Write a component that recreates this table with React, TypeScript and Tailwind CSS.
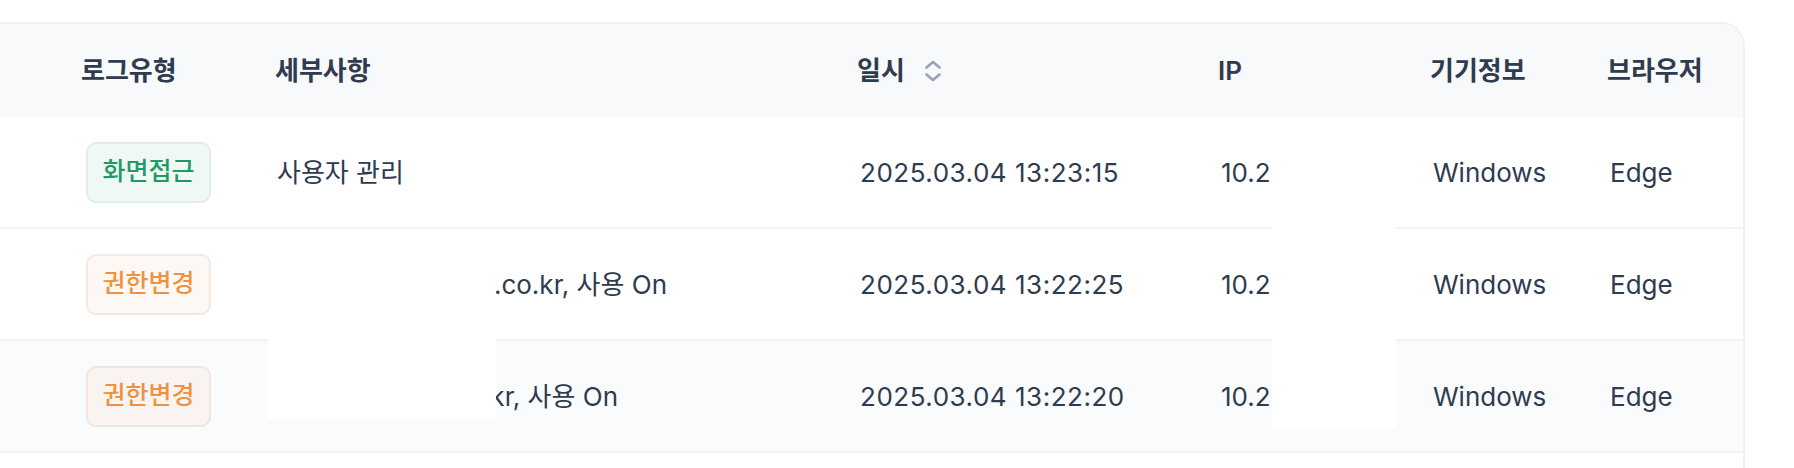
import { ReactNode } from "react";

type Row = {
    type: string;
    badge: string;
    detail: string;
    detailBox: string;
    date: string;
    ip: string;
    device: string;
    browser: string;
    rowBg: string;
};

const rows: Row[] = [
    {
        type: "화면접근",
        badge: "bg-[#eff8f4] border-[#dfeee7] text-[#1f9a66]",
        detail: "사용자 관리",
        detailBox: "",
        date: "2025.03.04 13:23:15",
        ip: "10.20.130.25",
        device: "Windows",
        browser: "Edge",
        rowBg: "bg-white",
    },
    {
        type: "권한변경",
        badge: "bg-[rgba(240,140,60,0.06)] border-[rgba(200,150,120,0.16)] text-[#ef923f]",
        detail: "admin@test.co.kr, 사용 On",
        detailBox: "inline-block w-[390px] text-right",
        date: "2025.03.04 13:22:25",
        ip: "10.20.130.25",
        device: "Windows",
        browser: "Edge",
        rowBg: "bg-white",
    },
    {
        type: "권한변경",
        badge: "bg-[rgba(240,140,60,0.06)] border-[rgba(200,150,120,0.16)] text-[#ef923f]",
        detail: "user@ab.co.kr, 사용 On",
        detailBox: "inline-block w-[341px] text-right",
        date: "2025.03.04 13:22:20",
        ip: "10.20.130.25",
        device: "Windows",
        browser: "Edge",
        rowBg: "bg-[#fafbfc]",
    },
];

const cols = "grid grid-cols-[194px_582px_361px_212px_177px_1fr] pl-[81px]";

function SortIcon() {
    return (
        <svg width="16" height="22" viewBox="0 0 16 22" fill="none" stroke="#94a3b8" strokeWidth="2.6" strokeLinecap="round" strokeLinejoin="round">
            <path d="M1.5 7.5 L8 2 L14.5 7.5" />
            <path d="M1.5 14.5 L8 20 L14.5 14.5" />
        </svg>
    );
}

function Cell({ children, className = "" }: { children: ReactNode; className?: string }) {
    return <div className={`flex items-center whitespace-nowrap ${className}`}>{children}</div>;
}

export default function App() {
    return (
        <div className="w-[1794px] h-[468px] overflow-hidden bg-white font-[Inter,'Noto_Sans_CJK_KR',sans-serif] text-[#2f3b50]">
            <div className="relative mt-[22px] w-[1745px] h-[446px] border-t-2 border-r-2 border-[#eef1f5] rounded-tr-[24px] overflow-hidden">
                {/* 헤더 */}
                <div className={`${cols} h-[93px] bg-[#f8f9fb] text-[26px] font-semibold text-[#2f3b4e]`}>
                    <Cell>로그유형</Cell>
                    <Cell>세부사항</Cell>
                    <Cell className="gap-5">
                        일시
                        <SortIcon />
                    </Cell>
                    <Cell>IP</Cell>
                    <Cell>기기정보</Cell>
                    <Cell>브라우저</Cell>
                </div>

                {rows.map((row, i) => (
                    <div key={i} className={`${cols} h-[112px] border-b-2 border-[#f1f2f5] text-[26px] ${row.rowBg}`}>
                        <Cell className="pl-[5px]">
                            <span className={`flex items-center justify-center w-[125px] h-[61px] rounded-[10px] border-2 text-[25px] font-medium ${row.badge}`}>
                                {row.type}
                            </span>
                        </Cell>
                        <Cell className="pl-[2px]">
                            <span className={row.detailBox}>{row.detail}</span>
                        </Cell>
                        <Cell className="pl-[3px] tracking-[0.02em]">{row.date}</Cell>
                        <Cell className="pl-[3px]">{row.ip}</Cell>
                        <Cell className="pl-[3px]">{row.device}</Cell>
                        <Cell className="pl-[3px]">{row.browser}</Cell>
                    </div>
                ))}
                <div className="h-[20px] bg-white" />

                {/* 개인정보 마스킹 */}
                <div className="absolute left-[268px] top-[206px] w-[228px] h-[189px] bg-white" />
                <div className="absolute left-[1272px] top-[95px] w-[124px] h-[310px] bg-white" />
            </div>
        </div>
    );
}
